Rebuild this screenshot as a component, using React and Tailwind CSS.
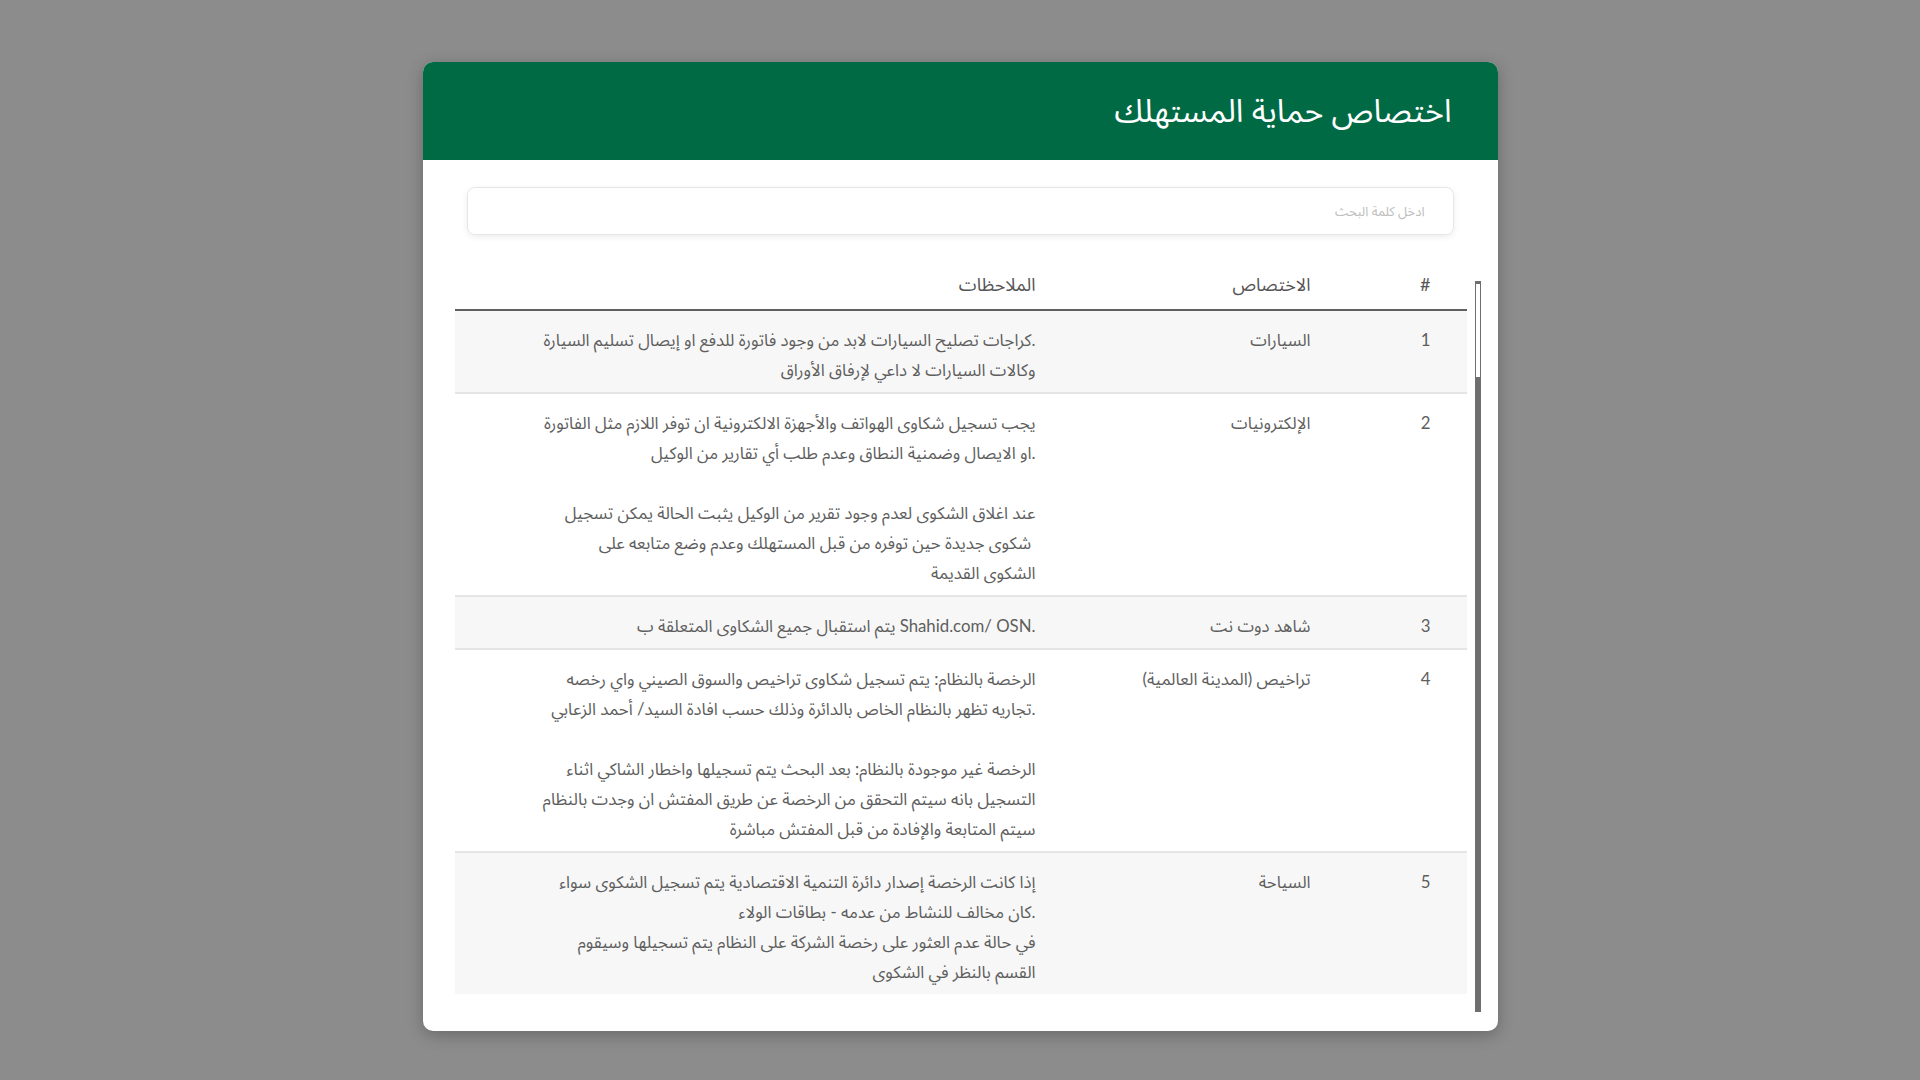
import React from 'react';

const font = { fontFamily: '"Lato", "Noto Sans Arabic", "DejaVu Sans", sans-serif' };

// rows of the table, lines kept as shown on the page
const rows = [
    {
        id: 1,
        name: 'السيارات',
        notes: [
            'كراجات تصليح السيارات لابد من وجود فاتورة للدفع او إيصال تسليم السيارة.',
            'وكالات السيارات لا داعي لإرفاق الأوراق',
        ],
    },
    {
        id: 2,
        name: 'الإلكترونيات',
        notes: [
            'يجب تسجيل شكاوى الهواتف والأجهزة الالكترونية ان توفر اللازم مثل الفاتورة',
            'او الايصال وضمنية النطاق وعدم طلب أي تقارير من الوكيل.',
            '',
            'عند اغلاق الشكوى لعدم وجود تقرير من الوكيل يثبت الحالة يمكن تسجيل',
            'شكوى جديدة حين توفره من قبل المستهلك وعدم وضع متابعه على\u00a0',
            'الشكوى القديمة',
        ],
    },
    {
        id: 3,
        name: 'شاهد دوت نت',
        notes: ['يتم استقبال جميع الشكاوى المتعلقة ب Shahid.com/ OSN.'],
    },
    {
        id: 4,
        name: 'تراخيص (المدينة العالمية)',
        notes: [
            'الرخصة بالنظام: يتم تسجيل شكاوى تراخيص والسوق الصيني واي رخصه',
            'تجاريه تظهر بالنظام الخاص بالدائرة وذلك حسب افادة السيد/ أحمد الزعابي.',
            '',
            'الرخصة غير موجودة بالنظام: بعد البحث يتم تسجيلها واخطار الشاكي اثناء',
            'التسجيل بانه سيتم التحقق من الرخصة عن طريق المفتش ان وجدت بالنظام',
            'سيتم المتابعة والإفادة من قبل المفتش مباشرة',
        ],
    },
    {
        id: 5,
        name: 'السياحة',
        notes: [
            'إذا كانت الرخصة إصدار دائرة التنمية الاقتصادية يتم تسجيل الشكوى سواء',
            'كان مخالف للنشاط من عدمه - بطاقات الولاء.',
            'في حالة عدم العثور على رخصة الشركة على النظام يتم تسجيلها وسيقوم',
            'القسم بالنظر في الشكوى',
        ],
    },
];

function Row({ row, index }) {
    return (
        <div
            className={
                'grid grid-cols-[1fr_275px_120px] pt-[14px] pb-[7px] leading-[30px] text-[16.8px] text-[#5e5e5e] ' +
                (index % 2 === 0 ? 'bg-[#f7f7f7] ' : 'bg-white ') +
                (index > 0 ? 'border-t-2 border-[#e5e5e5]' : '')
            }
        >
            {/* Notes */}
            <div className="pr-[36px] text-right">
                {row.notes.map((line, i) => (
                    <div key={i} className="h-[30px] whitespace-nowrap">{line}</div>
                ))}
            </div>
            {/* Specialty */}
            <div className="pr-[36px] text-right">{row.name}</div>
            {/* Number */}
            <div className="pr-[36px] text-right">{row.id}</div>
        </div>
    );
}

export default function App() {
    return (
        <div className="min-h-screen bg-[#8c8c8c] flex justify-center pt-[62px]" style={font}>
            <div className="w-[1075px] h-[969px] bg-white rounded-[10px] overflow-hidden shadow-[0_4px_16px_rgba(0,0,0,0.25)] flex flex-col">
                {/* Header */}
                <div className="h-[98px] shrink-0 bg-[#006a45] flex items-center justify-end pr-[46px]">
                    <h1 className="text-white text-[32px] font-normal leading-none pb-[2px]">اختصاص حماية المستهلك</h1>
                </div>

                {/* Search */}
                <div className="mx-[44px] mt-[27px] h-[48px] shrink-0 rounded-[8px] border border-[#e6e6e6] shadow-[0_2px_6px_rgba(0,0,0,0.08)] flex items-center">
                    <input
                        type="text"
                        placeholder="ادخل كلمة البحث"
                        dir="rtl"
                        className="w-full h-full bg-transparent outline-none px-[28px] text-[13px] text-[#555] placeholder-[#bdbdbd]"
                    />
                </div>

                {/* Table + scrollbar */}
                <div className="mt-[35px] ml-[32px] mr-[17px] h-[742px] shrink-0 flex gap-[8px]">
                    <div className="flex-1 overflow-hidden">
                        <div className="grid grid-cols-[1fr_275px_120px] pb-[11px] leading-[28px] text-[18px] text-[#555] border-b-2 border-[#5f5f5f]">
                            <div className="pr-[36px] text-right">الملاحظات</div>
                            <div className="pr-[36px] text-right">الاختصاص</div>
                            <div className="pr-[36px] text-right">#</div>
                        </div>
                        {rows.map((row, i) => (
                            <Row key={row.id} row={row} index={i} />
                        ))}
                    </div>
                    <div className="w-[6px] mt-[11px] bg-[#6f6f6f] flex flex-col">
                        <div className="h-[97px] bg-white border border-t-[3px] border-[#6f6f6f]" />
                    </div>
                </div>
            </div>
        </div>
    );
}
